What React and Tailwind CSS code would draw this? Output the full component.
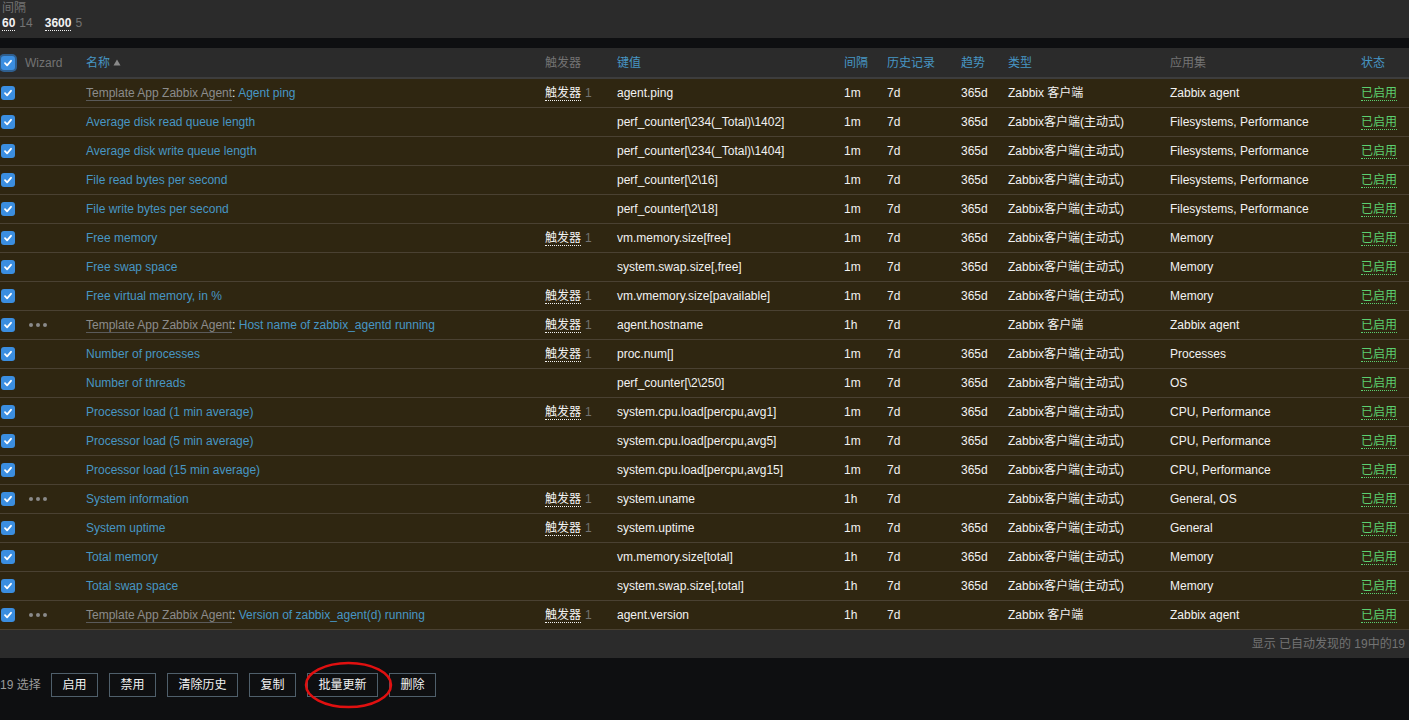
const rows = [
  { tpl: true, name: "Agent ping", trig: true, key: "agent.ping", int: "1m", hist: "7d", trend: "365d", type: "Zabbix 客户端", apps: "Zabbix agent" },
  { name: "Average disk read queue length", key: "perf_counter[\\234(_Total)\\1402]", int: "1m", hist: "7d", trend: "365d", type: "Zabbix客户端(主动式)", apps: "Filesystems, Performance" },
  { name: "Average disk write queue length", key: "perf_counter[\\234(_Total)\\1404]", int: "1m", hist: "7d", trend: "365d", type: "Zabbix客户端(主动式)", apps: "Filesystems, Performance" },
  { name: "File read bytes per second", key: "perf_counter[\\2\\16]", int: "1m", hist: "7d", trend: "365d", type: "Zabbix客户端(主动式)", apps: "Filesystems, Performance" },
  { name: "File write bytes per second", key: "perf_counter[\\2\\18]", int: "1m", hist: "7d", trend: "365d", type: "Zabbix客户端(主动式)", apps: "Filesystems, Performance" },
  { name: "Free memory", trig: true, key: "vm.memory.size[free]", int: "1m", hist: "7d", trend: "365d", type: "Zabbix客户端(主动式)", apps: "Memory" },
  { name: "Free swap space", key: "system.swap.size[,free]", int: "1m", hist: "7d", trend: "365d", type: "Zabbix客户端(主动式)", apps: "Memory" },
  { name: "Free virtual memory, in %", trig: true, key: "vm.vmemory.size[pavailable]", int: "1m", hist: "7d", trend: "365d", type: "Zabbix客户端(主动式)", apps: "Memory" },
  { dots: true, tpl: true, name: "Host name of zabbix_agentd running", trig: true, key: "agent.hostname", int: "1h", hist: "7d", trend: "", type: "Zabbix 客户端", apps: "Zabbix agent" },
  { name: "Number of processes", trig: true, key: "proc.num[]", int: "1m", hist: "7d", trend: "365d", type: "Zabbix客户端(主动式)", apps: "Processes" },
  { name: "Number of threads", key: "perf_counter[\\2\\250]", int: "1m", hist: "7d", trend: "365d", type: "Zabbix客户端(主动式)", apps: "OS" },
  { name: "Processor load (1 min average)", trig: true, key: "system.cpu.load[percpu,avg1]", int: "1m", hist: "7d", trend: "365d", type: "Zabbix客户端(主动式)", apps: "CPU, Performance" },
  { name: "Processor load (5 min average)", key: "system.cpu.load[percpu,avg5]", int: "1m", hist: "7d", trend: "365d", type: "Zabbix客户端(主动式)", apps: "CPU, Performance" },
  { name: "Processor load (15 min average)", key: "system.cpu.load[percpu,avg15]", int: "1m", hist: "7d", trend: "365d", type: "Zabbix客户端(主动式)", apps: "CPU, Performance" },
  { dots: true, name: "System information", trig: true, key: "system.uname", int: "1h", hist: "7d", trend: "", type: "Zabbix客户端(主动式)", apps: "General, OS" },
  { name: "System uptime", trig: true, key: "system.uptime", int: "1m", hist: "7d", trend: "365d", type: "Zabbix客户端(主动式)", apps: "General" },
  { name: "Total memory", key: "vm.memory.size[total]", int: "1h", hist: "7d", trend: "365d", type: "Zabbix客户端(主动式)", apps: "Memory" },
  { name: "Total swap space", key: "system.swap.size[,total]", int: "1h", hist: "7d", trend: "365d", type: "Zabbix客户端(主动式)", apps: "Memory" },
  { dots: true, tpl: true, name: "Version of zabbix_agent(d) running", trig: true, key: "agent.version", int: "1h", hist: "7d", trend: "", type: "Zabbix 客户端", apps: "Zabbix agent" },
];

const cols =
  "grid grid-cols-[25px_61px_459px_72px_227px_43px_74px_47px_162px_191px_48px] items-center";

function Check({ header }) {
  return (
    <span
      className={`flex h-[14px] w-[14px] items-center justify-center rounded-[3px] bg-[#3b8ee0] ${
        header ? "shadow-[0_0_0_2px_#2f5f8f]" : ""
      }`}
    >
      <svg width="10" height="10" viewBox="0 0 10 10" fill="none">
        <path d="M2 5.2 4.1 7.3 8 2.8" stroke="white" strokeWidth="1.8" strokeLinecap="round" strokeLinejoin="round" />
      </svg>
    </span>
  );
}

function Dots() {
  return (
    <span className="flex gap-[3px] pl-[4px]">
      <span className="h-[4px] w-[4px] rounded-full bg-[#8a8a8a]" />
      <span className="h-[4px] w-[4px] rounded-full bg-[#8a8a8a]" />
      <span className="h-[4px] w-[4px] rounded-full bg-[#8a8a8a]" />
    </span>
  );
}

export default function App() {
  return (
    <div className="relative min-h-[720px] bg-[#0e0f11] text-[12px] text-[#f2f2f2] font-['Liberation_Sans','Noto_Sans_CJK_SC',sans-serif]">
      <div className="h-[38px] bg-[#2b2b2b] pl-[2px] pt-[1px] leading-[14px]">
        <div className="text-[#737373]">间隔</div>
        <div className="flex items-baseline gap-[4px] pt-[1px]">
          <span className="border-b border-dotted border-[#f2f2f2] font-bold leading-[13px]">60</span>
          <span className="text-[#737373]">14</span>
          <span className="ml-[8px] border-b border-dotted border-[#f2f2f2] font-bold leading-[13px]">3600</span>
          <span className="text-[#737373]">5</span>
        </div>
      </div>

      <div className="h-[10px]" />

      <div className="bg-[#2b2b2b]">
        <div className={`${cols} h-[31px] border-b-[2px] border-[#3d3d3d]`}>
          <div className="pl-[1px]">
            <Check header />
          </div>
          <div className="text-[#737373]">Wizard</div>
          <div className="flex items-center gap-[3px] text-[#4796c4]">
            名称
            <svg width="8" height="7" viewBox="0 0 8 7">
              <path d="M4 0.5 7.5 6.5H0.5Z" fill="#8a8a8a" />
            </svg>
          </div>
          <div className="text-[#737373]">触发器</div>
          <div className="text-[#4796c4]">键值</div>
          <div className="text-[#4796c4]">间隔</div>
          <div className="text-[#4796c4]">历史记录</div>
          <div className="text-[#4796c4]">趋势</div>
          <div className="text-[#4796c4]">类型</div>
          <div className="text-[#737373]">应用集</div>
          <div className="text-[#4796c4]">状态</div>
        </div>

        {rows.map((r, i) => (
          <div key={i} className={`${cols} h-[29px] border-b border-[#4a4132] bg-[#2f2611]`}>
            <div className="pl-[1px]">
              <Check />
            </div>
            <div>{r.dots && <Dots />}</div>
            <div className="whitespace-nowrap">
              {r.tpl && (
                <>
                  <span className="border-b border-[#5a5a5a] text-[#8c8c8c]">Template App Zabbix Agent</span>
                  <span>: </span>
                </>
              )}
              <span className="text-[#4796c4]">{r.name}</span>
            </div>
            <div className="whitespace-nowrap">
              {r.trig && (
                <>
                  <span className="border-b border-dotted border-[#f2f2f2]">触发器</span>
                  <span className="ml-[4px] text-[#737373]">1</span>
                </>
              )}
            </div>
            <div className="whitespace-nowrap">{r.key}</div>
            <div>{r.int}</div>
            <div>{r.hist}</div>
            <div>{r.trend}</div>
            <div className="whitespace-nowrap">{r.type}</div>
            <div className="whitespace-nowrap">{r.apps}</div>
            <div>
              <span className="border-b border-dotted border-[#5cd070] text-[#5cd070]">已启用</span>
            </div>
          </div>
        ))}

        <div className="flex h-[28px] items-center justify-end pr-[4px] text-[#737373]">
          显示 已自动发现的 19中的19
        </div>
      </div>

      <div className="flex items-center gap-[11px] pt-[15px]">
        <span className="ml-0 mr-[2px] w-[38px] whitespace-nowrap text-[#9a9a9a]">19 选择</span>
        {["启用", "禁用", "清除历史", "复制", "批量更新", "删除"].map((b) => (
          <button
            key={b}
            className="h-[24px] border border-[#4f5f6b] px-[10.5px] text-[12px] text-[#f2f2f2]"
          >
            {b}
          </button>
        ))}
      </div>

      <svg className="absolute left-[304px] top-[661px]" width="89" height="48" viewBox="0 0 89 48">
        <ellipse cx="44.5" cy="24" rx="42.5" ry="22" fill="none" stroke="#e01010" strokeWidth="2.5" />
      </svg>
    </div>
  );
}
